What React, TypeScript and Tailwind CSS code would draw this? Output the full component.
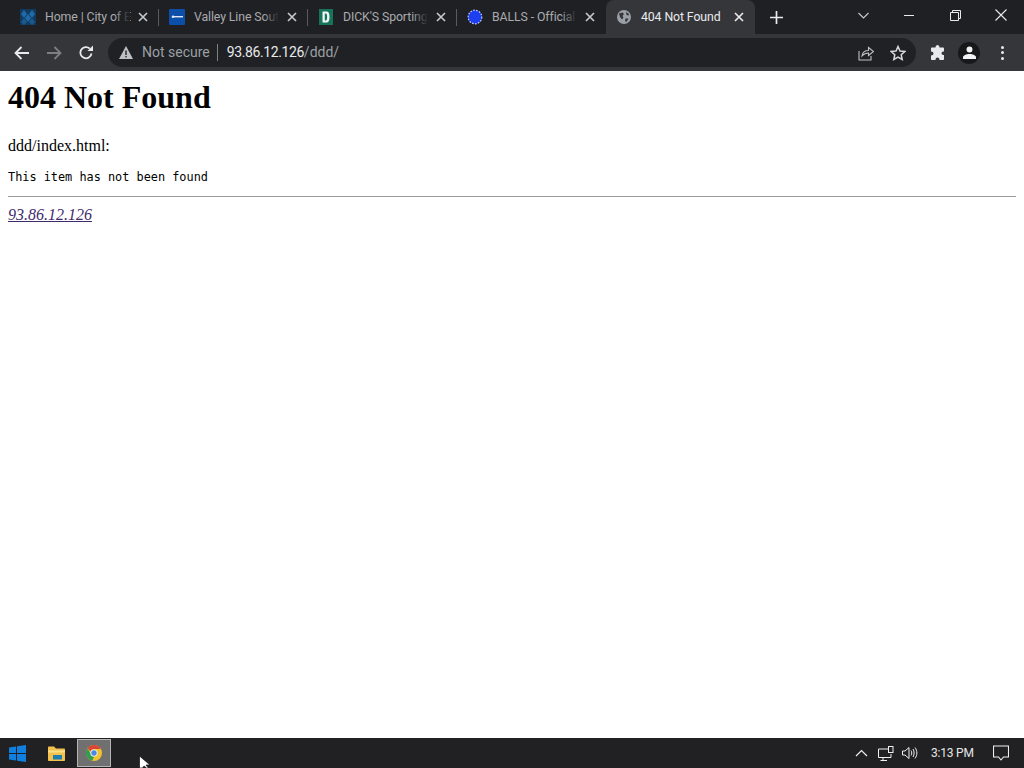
import React from "react";

const ui = "font-['Roboto','Liberation_Sans',sans-serif]";

function Close({ white }: { white?: boolean }) {
  return (
    <svg width="10" height="10" viewBox="0 0 10 10" className="shrink-0" stroke={white ? "#e8eaed" : "#c4c7cb"} strokeWidth="1.7" fill="none">
      <path d="M1 1 9 9M9 1 1 9" />
    </svg>
  );
}

function Tab({ icon, title, active, sep }: { icon: React.ReactNode; title: string; active?: boolean; sep?: boolean }) {
  return (
    <div className={`relative flex h-full w-[149px] shrink-0 items-center pl-[10px] ${active ? "rounded-t-lg bg-[#35363a]" : ""}`}>
      <div className="flex h-4 w-4 shrink-0 items-center justify-center">{icon}</div>
      <div className={`relative ml-[9px] w-[85px] whitespace-nowrap text-[12.3px] leading-4 tracking-[-0.1px] ${active ? "text-[#e8eaed]" : "text-[#a9abaf]"}`}>
        {title}
        {!active && <div className="absolute right-0 top-0 h-4 w-4 bg-gradient-to-r from-transparent to-[#1f2023]" />}
      </div>
      <div className="ml-[8px]"><Close white={active} /></div>
      {sep && <div className="absolute right-0 top-[9px] h-[17px] w-px bg-[#5a5b5f]" />}
    </div>
  );
}

const CityIcon = (
  <svg width="16" height="16" viewBox="0 0 16 16">
    <rect width="16" height="16" fill="#123a5e" />
    <path d="M4 1 7 5 4 9 1 5ZM12 1 15 5 12 9 9 5ZM8 5 11 9 8 13 5 9Z" fill="#1f6aa8" />
    <path d="M4 9 7 13 4 16 1 13ZM12 9 15 13 12 16 9 13Z" fill="#1b5a91" />
  </svg>
);
const ValleyIcon = (
  <svg width="16" height="16" viewBox="0 0 16 16">
    <rect width="16" height="16" rx="1" fill="#0b4fa8" />
    <rect x="4" y="7" width="10" height="1.400" fill="#dfe9f5" />
    <circle cx="4" cy="7.700" r="1.300" fill="#dfe9f5" />
  </svg>
);
const DicksIcon = (
  <svg width="16" height="16" viewBox="0 0 16 16">
    <rect x="1" width="14" height="16" fill="#17735c" />
    <path d="M4.500 2.500h4c2 0 3 1.800 3 5.500s-1 5.500-3 5.500h-4ZM6.800 4.500v7h1c1 0 1.300-1.300 1.300-3.500s-.3-3.500-1.300-3.500Z" fill="#f1f5f3" fillRule="evenodd" />
  </svg>
);
const BallsIcon = (
  <svg width="16" height="16" viewBox="0 0 16 16">
    <circle cx="8" cy="8" r="7" fill="#1d3ff0" />
    <circle cx="8" cy="8" r="6.800" fill="none" stroke="#c7d0fb" strokeWidth="1.200" strokeDasharray="1.600 1.400" />
  </svg>
);
const GlobeIcon = (
  <svg width="16" height="16" viewBox="0 0 16 16">
    <circle cx="8" cy="8" r="7" fill="#9aa0a6" />
    <path d="M3 4.500 6.500 3.500 8 5 6.500 7 7.500 8.500 6 10.500 4 8ZM9.500 9.500 12.500 9.500 10.500 13 9 12ZM10 3 13 5 12.500 6.500 10.500 6Z" fill="#35363a" />
  </svg>
);

function Windows() {
  return (
    <svg width="17" height="17" viewBox="0 0 17 17" fill="#0f7fe0">
      <path d="M0 2.500 7 1.500V8H0ZM8 1.300 17 0V8H8ZM0 9H7V15.500L0 14.500ZM8 9H17V17L8 15.700Z" />
    </svg>
  );
}

function Folder() {
  return (
    <svg width="17" height="15" viewBox="0 0 17 15">
      <path d="M0 1.500C0 .8.500.500 1 .500H6L8 2.500H16C16.600 2.500 17 3 17 3.500V14C17 14.600 16.600 15 16 15H1C.500 15 0 14.600 0 14Z" fill="#f2c14e" />
      <rect x="0" y="4.500" width="17" height="2" fill="#fbe08a" />
      <rect x="5" y="9" width="9" height="4.500" fill="#1d7fb0" />
    </svg>
  );
}

function Chrome() {
  return (
    <svg width="16" height="16" viewBox="0 0 16 16">
      <circle cx="8" cy="8" r="8" fill="#f2c230" />
      <path d="M8 0A8 8 0 0 1 15 4H8A4 4 0 0 0 4.400 6.300L1.500 3.200A8 8 0 0 1 8 0Z" fill="#d8453a" />
      <path d="M1.500 3.200 4.600 8.500A4 4 0 0 0 8 12L6.200 15.800A8 8 0 0 1 1.500 3.200Z" fill="#2f9e50" />
      <circle cx="8" cy="8" r="3.600" fill="#f4f4f4" />
      <circle cx="8" cy="8" r="2.700" fill="#4c86e8" />
    </svg>
  );
}

export default function App() {
  return (
    <div className="flex h-[768px] w-[1024px] flex-col overflow-hidden bg-white">
      <div className={`flex h-[34px] shrink-0 items-end bg-[#1f2023] pl-[10px] ${ui}`}>
        <Tab icon={CityIcon} title="Home | City of E" sep />
        <Tab icon={ValleyIcon} title="Valley Line Sout" sep />
        <Tab icon={DicksIcon} title="DICK'S Sporting" sep />
        <Tab icon={BallsIcon} title="BALLS - Official" />
        <Tab icon={GlobeIcon} title="404 Not Found" active />
        <div className="ml-[15px] flex h-full items-center">
          <svg width="13" height="13" viewBox="0 0 13 13" stroke="#e8eaed" strokeWidth="1.700" fill="none"><path d="M6.500 0V13M0 6.500H13" /></svg>
        </div>
        <div className="ml-auto flex h-full items-start">
          <div className="flex h-[30px] w-[46px] items-center justify-center">
            <svg width="11" height="7" viewBox="0 0 11 7" stroke="#c9cacc" strokeWidth="1.100" fill="none"><path d="M.5 1 5.500 6 10.500 1" /></svg>
          </div>
          <div className="flex h-[30px] w-[46px] items-center justify-center">
            <div className="h-px w-[10px] bg-[#e8eaed]" />
          </div>
          <div className="flex h-[30px] w-[46px] items-center justify-center">
            <svg width="11" height="11" viewBox="0 0 11 11" stroke="#e8eaed" strokeWidth="1" fill="none"><path d="M.5 2.500H8.500V10.500H.5ZM2.500 2.500V.5H10.500V8.500H8.500" /></svg>
          </div>
          <div className="flex h-[30px] w-[46px] items-center justify-center">
            <svg width="12" height="12" viewBox="0 0 12 12" stroke="#e8eaed" strokeWidth="1.100" fill="none"><path d="M.5.5 11.500 11.500M11.500.5 .5 11.500" /></svg>
          </div>
        </div>
      </div>

      <div className={`flex h-[37px] shrink-0 items-center bg-[#35363a] ${ui}`}>
        <div className="ml-[14px] flex w-[94px] items-center gap-[16px]">
          <svg width="16" height="14" viewBox="0 0 16 14" stroke="#e8eaed" strokeWidth="1.800" fill="none"><path d="M15 7H2M7.500 1 1.500 7 7.500 13" /></svg>
          <svg width="16" height="14" viewBox="0 0 16 14" stroke="#7d7f83" strokeWidth="1.800" fill="none"><path d="M1 7H14M8.500 1 14.500 7 8.500 13" /></svg>
          <svg width="16" height="16" viewBox="0 0 16 16" fill="none"><path d="M13.500 8.500A5.600 5.600 0 1 1 11.800 3.600" stroke="#e8eaed" strokeWidth="1.800" /><path d="M9.500 6H15V.5Z" fill="#e8eaed" /></svg>
        </div>
        <div className="flex h-[29px] w-[808px] items-center rounded-full bg-[#202124] pl-[11px] text-[14px]">
          <svg width="14" height="13" viewBox="0 0 14 13"><path d="M7 0 14 13H0Z" fill="#bdc1c6" /><rect x="6.300" y="4.500" width="1.400" height="4.500" fill="#202124" /><rect x="6.300" y="10" width="1.400" height="1.400" fill="#202124" /></svg>
          <span className="ml-[9px] text-[#9aa0a6]">Not secure</span>
          <div className="ml-[7px] h-[17px] w-px bg-[#7d7f83]" />
          <span className="ml-[9px] text-[#9aa0a6]"><span className="tracking-[-0.4px] text-[#e8eaed]">93.86.12.126</span>/ddd/</span>
          <div className="ml-auto mr-[10px] flex items-center gap-[16px]">
            <svg width="16" height="16" viewBox="0 0 16 16" stroke="#bdc1c6" strokeWidth="1.100" fill="none"><path d="M1 6V15H13V11" /><path d="M4 11C4.500 7.500 7 5.500 10.500 5.500V2.500L15.500 6.500 10.500 10.500V8C8 8 5.800 9 4 11Z" /></svg>
            <svg width="16" height="16" viewBox="0 0 16 16" stroke="#d5d7da" strokeWidth="1.500" fill="none"><path d="M8 1.500 10 6 14.800 6.500 11.200 9.700 12.200 14.500 8 12 3.800 14.500 4.800 9.700 1.200 6.500 6 6Z" /></svg>
          </div>
        </div>
        <div className="ml-[14px] flex items-center">
          <svg width="15" height="15" viewBox="0 0 15 15" fill="#e8eaed"><path d="M5.500 2.500C5.500 1 6.500 0 7.500 0S9.500 1 9.500 2.500H13C13.600 2.500 14 3 14 3.500V6.500C12.500 6.500 11.500 7 11.500 8.200S12.500 10 14 10V14C14 14.600 13.600 15 13 15H9.500C9.500 13.500 8.800 12.500 7.500 12.500S5.500 13.500 5.500 15H2C1.400 15 1 14.600 1 14V10.500C2.500 10.500 3.500 9.700 3.500 8.500S2.500 6.500 1 6.500V3.500C1 3 1.400 2.500 2 2.500Z" /></svg>
          <div className="ml-[13px] flex h-[22px] w-[22px] items-center justify-center rounded-full bg-[#17181a]">
            <svg width="13" height="13" viewBox="0 0 14 14" fill="#f1f3f4"><circle cx="7" cy="3.800" r="3.200" /><path d="M0 14V12C0 10 3.500 8.500 7 8.500S14 10 14 12V14Z" /></svg>
          </div>
          <div className="ml-[21px] flex flex-col gap-[2.500px]">
            <div className="h-[3px] w-[3px] rounded-full bg-[#e8eaed]" />
            <div className="h-[3px] w-[3px] rounded-full bg-[#e8eaed]" />
            <div className="h-[3px] w-[3px] rounded-full bg-[#e8eaed]" />
          </div>
        </div>
      </div>

      <div className="min-h-0 flex-1 bg-white p-2 font-['Liberation_Serif',serif] text-[16px] text-black">
        <h1 className="text-[32px] font-bold leading-[37px]">404 Not Found</h1>
        <p className="mt-[21px] leading-[18px]">ddd/index.html:</p>
        <pre className="mt-[15px] font-['DejaVu_Sans_Mono',monospace] text-[11.87px] leading-[14px]">This item has not been found</pre>
        <hr className="mt-[12px] border-t border-[#9a9a9a]" />
        <a className="mt-[9px] block w-fit italic leading-[18px] text-[#3f2a6b] underline">93.86.12.126</a>
      </div>

      <div className={`flex h-[30px] shrink-0 items-center bg-[#212123] ${ui}`}>
        <div className="ml-[9px] flex h-full w-[17px] items-center"><Windows /></div>
        <div className="ml-[22px] flex items-center"><Folder /></div>
        <div className="ml-[12px] flex h-[28px] w-[34px] items-center justify-center border border-[#b5b5b5] bg-[#707070]"><Chrome /></div>
        <div className="relative ml-auto flex h-full items-center text-[12px] text-[#e6e6e6]">
          <svg className="mr-[10px]" width="13" height="8" viewBox="0 0 13 8" stroke="#f0f0f0" strokeWidth="1.200" fill="none"><path d="M1 7 6.500 1.500 12 7" /></svg>
          <svg className="mr-[8px]" width="16" height="15" viewBox="0 0 16 15" stroke="#f0f0f0" strokeWidth="1" fill="none"><path d="M10 3H.5V11.500H13V8M5 11.500V14M2.500 14.500H9" /><rect x="10.500" y=".5" width="4.500" height="6" /></svg>
          <svg width="17" height="14" viewBox="0 0 17 14" stroke="#f0f0f0" strokeWidth="1" fill="none"><path d="M.5 5H3L7 1.500V12.500L3 9H.5Z" /><path d="M9 4.500C10 6 10 8 9 9.500M11 3C12.500 5.500 12.500 8.500 11 11M13 1.500C15.500 5 15.500 9 13 12.500" /></svg>
          <span className="ml-[12px] w-[43px] whitespace-nowrap tracking-[-0.2px]">3:13 PM</span>
          <svg className="ml-[19px] mr-[15px]" width="16" height="16" viewBox="0 0 16 16" stroke="#f0f0f0" strokeWidth="1.100" fill="none"><path d="M.5 1H15.500V12H10.500L8 15 5.500 12H.5Z" /></svg>
        </div>
      </div>

      <svg className="absolute left-[139px] top-[756px]" width="12" height="12" viewBox="0 0 12 12"><path d="M.5 0V12H3.500L5 10 7.500 12 9.500 12 7 9H11Z" fill="#fff" stroke="#111" strokeWidth=".7" /></svg>
    </div>
  );
}
